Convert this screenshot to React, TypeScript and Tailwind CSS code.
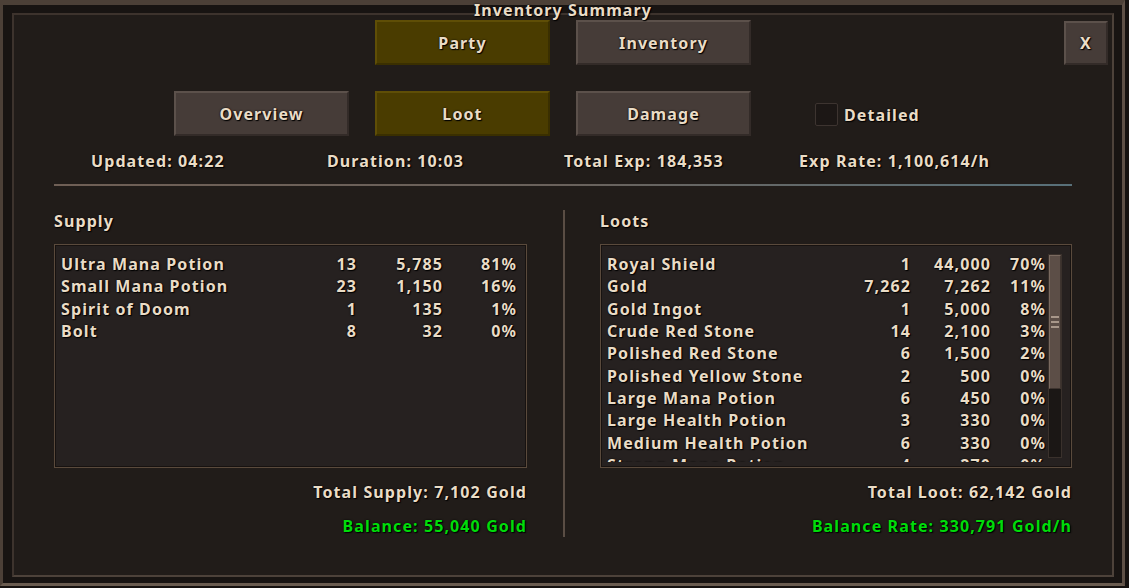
import React from "react";

type Row = { name: string; count: string; value: string; pct: string };

const supply: Row[] = [
  { name: "Ultra Mana Potion", count: "13", value: "5,785", pct: "81%" },
  { name: "Small Mana Potion", count: "23", value: "1,150", pct: "16%" },
  { name: "Spirit of Doom", count: "1", value: "135", pct: "1%" },
  { name: "Bolt", count: "8", value: "32", pct: "0%" },
];

const loots: Row[] = [
  { name: "Royal Shield", count: "1", value: "44,000", pct: "70%" },
  { name: "Gold", count: "7,262", value: "7,262", pct: "11%" },
  { name: "Gold Ingot", count: "1", value: "5,000", pct: "8%" },
  { name: "Crude Red Stone", count: "14", value: "2,100", pct: "3%" },
  { name: "Polished Red Stone", count: "6", value: "1,500", pct: "2%" },
  { name: "Polished Yellow Stone", count: "2", value: "500", pct: "0%" },
  { name: "Large Mana Potion", count: "6", value: "450", pct: "0%" },
  { name: "Large Health Potion", count: "3", value: "330", pct: "0%" },
  { name: "Medium Health Potion", count: "6", value: "330", pct: "0%" },
  { name: "Strong Mana Potion", count: "4", value: "270", pct: "0%" },
];

const font =
  "font-['Noto_Sans',sans-serif] font-bold text-[16px] tracking-[1.1px] [text-shadow:1px_1px_1px_#000,0_0_2px_#000]";
const txt = `${font} text-[#eadcc6]`;
const green = `${font} text-[#00dc0a]`;

const GameButton: React.FC<{ label: string; active?: boolean }> = ({ label, active }) => (
  <div
    className={
      active
        ? "w-[175px] h-[45px] flex items-center justify-center border-2 border-[#5f4e06] border-b-[#3a2f00] border-r-[#3a2f00] bg-[#4a3c00]"
        : "w-[175px] h-[45px] flex items-center justify-center border-2 border-[#5c514b] border-b-[#332b28] border-r-[#332b28] bg-[#463c38]"
    }
  >
    <span className={txt}>{label}</span>
  </div>
);

const Scrollbar = () => (
  <div className="w-[14px] h-[204px] mt-[1px] ml-[2px] border border-[#3a312c] bg-[#1b1715] flex flex-col">
    <div className="h-[134px] border border-[#7a6a60] border-b-[#3e342f] border-r-[#3e342f] bg-[#5c4e47] flex flex-col items-center justify-center gap-[3px]">
      <div className="w-[8px] h-[2px] bg-[#a8978a]" />
      <div className="w-[8px] h-[2px] bg-[#a8978a]" />
      <div className="w-[8px] h-[2px] bg-[#a8978a]" />
    </div>
  </div>
);

const ListRows: React.FC<{ rows: Row[]; widths: [string, string, string] }> = ({ rows, widths }) => (
  <div className="flex flex-col">
    {rows.map((r) => (
      <div key={r.name} className={`flex leading-[22.33px] h-[22.33px] whitespace-nowrap ${txt}`}>
        <span className="flex-1">{r.name}</span>
        <span className={`${widths[0]} text-right`}>{r.count}</span>
        <span className={`${widths[1]} text-right`}>{r.value}</span>
        <span className={`${widths[2]} text-right`}>{r.pct}</span>
      </div>
    ))}
  </div>
);

export default function App() {
  return (
    <div className="w-[1129px] h-[588px] bg-[#161210] overflow-hidden">
      <div className="w-[1125px] h-[586px] border-[3px] border-t-[5px] border-[#4c4037] border-b-[#6a5c50] border-r-[#5e5046] bg-[#181412] pl-[9px] pr-[8px] pt-[8px] pb-[6px]">
        <div className="relative h-full border-2 border-[#3d332d] border-b-[#4d423a] border-r-[#4d423a] bg-[#211c19]">
          <div className={`absolute left-0 right-0 top-[-15px] text-center leading-[20px] ${txt}`}>
            Inventory Summary
          </div>

          {/* top tabs */}
          <div className="flex items-start pt-[5px] pl-[361px]">
            <div className="flex gap-[26px]">
              <GameButton label="Party" active />
              <GameButton label="Inventory" />
            </div>
            <div className="ml-auto mr-[4px] mt-[1px] w-[44px] h-[44px] flex items-center justify-center border-2 border-[#5c514b] border-b-[#332b28] border-r-[#332b28] bg-[#463c38]">
              <span className={txt}>X</span>
            </div>
          </div>

          {/* view tabs */}
          <div className="flex items-center mt-[26px] pl-[160px]">
            <div className="flex gap-[26px]">
              <GameButton label="Overview" />
              <GameButton label="Loot" active />
              <GameButton label="Damage" />
            </div>
            <div className="ml-[64px] mt-[2px] w-[23px] h-[23px] rounded-[2px] border border-[#3d3430] bg-[#1c1715]" />
            <span className={`ml-[6px] mt-[2px] ${txt}`}>Detailed</span>
          </div>

          {/* stats */}
          <div className={`flex mt-[15px] pl-[77px] leading-[20px] ${txt}`}>
            <span className="w-[236px]">Updated: 04:22</span>
            <span className="w-[237px]">Duration: 10:03</span>
            <span className="w-[235px]">Total Exp: 184,353</span>
            <span>Exp Rate: 1,100,614/h</span>
          </div>

          <div className="ml-[40px] mt-[13px] w-[1018px] h-[2px] bg-linear-to-r from-[#6f5f55] via-[#6a625c] to-[#587079]" />

          {/* columns */}
          <div className="flex ml-[40px] w-[1018px] mt-[25px]">
            <div className="w-[473px] flex flex-col">
              <div className={`leading-[20px] ${txt}`}>Supply</div>
              <div className="mt-[13px] h-[224px] border border-[#5a4a3c] shadow-[inset_0_0_0_1px_#171210] bg-[#262120] pt-[8px] pl-[6px] pr-[9px]">
                <ListRows rows={supply} widths={["w-[60px]", "w-[86px]", "w-[74px]"]} />
              </div>
              <div className={`mt-[14px] text-right leading-[20px] ${txt}`}>Total Supply: 7,102 Gold</div>
              <div className={`mt-[14px] text-right leading-[20px] ${green}`}>Balance: 55,040 Gold</div>
            </div>

            <div className="ml-[36px] mt-[-1px] w-[2px] h-[327px] bg-[#5a4d44]" />

            <div className="ml-[35px] w-[472px] flex flex-col">
              <div className={`leading-[20px] ${txt}`}>Loots</div>
              <div className="mt-[13px] h-[224px] border border-[#5a4a3c] shadow-[inset_0_0_0_1px_#171210] bg-[#262120] pt-[8px] pl-[6px] pr-[9px] flex">
                <div className="flex-1 h-[209px] overflow-hidden">
                  <ListRows rows={loots} widths={["w-[80px]", "w-[80px]", "w-[55px]"]} />
                </div>
                <Scrollbar />
              </div>
              <div className={`mt-[14px] text-right leading-[20px] ${txt}`}>Total Loot: 62,142 Gold</div>
              <div className={`mt-[14px] text-right leading-[20px] ${green}`}>Balance Rate: 330,791 Gold/h</div>
            </div>
          </div>
        </div>
      </div>
    </div>
  );
}
